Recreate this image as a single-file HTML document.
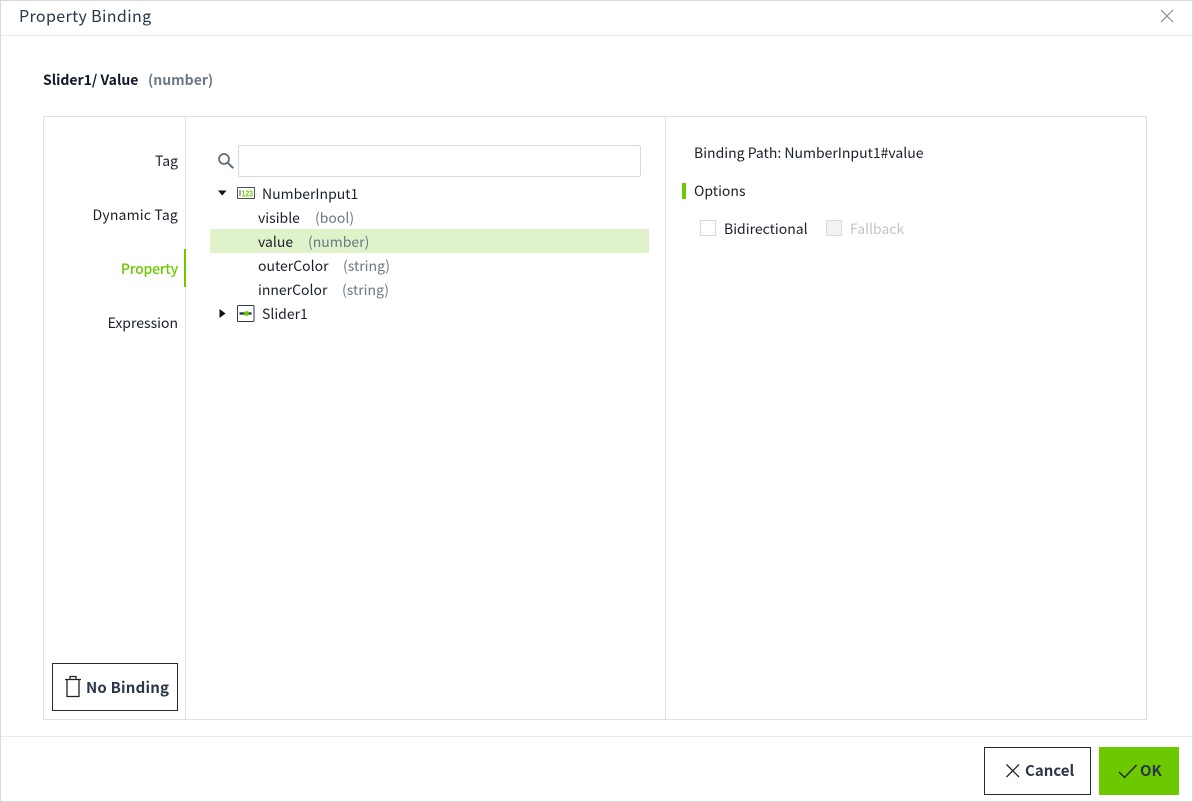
<!DOCTYPE html>
<html><head><meta charset="utf-8">
<style>
html,body{margin:0;padding:0;background:#fff}
#r{position:relative;width:1193px;height:802px;overflow:hidden;background:#fff;font-family:"Noto Sans CJK KR","Liberation Sans",sans-serif;font-size:14px;color:#1a202c}
#r div{position:absolute;white-space:nowrap}
.t{line-height:20px;height:20px}
.g{color:#6b7785}
.l{background:#e0e0e0}
</style></head><body>
<div id="r">
<div style="left:0;top:0;width:1191px;height:800px;border:1px solid #d9d9d9"></div>
<div class="l" style="left:1px;top:35px;width:1191px;height:1px;background:#ebebeb"></div>
<div class="l" style="left:1px;top:736px;width:1191px;height:1px;background:#ebebeb"></div>
<div class="t" style="left:19px;top:4px;font-size:16px;line-height:22px;height:22px;color:#2b3648;letter-spacing:.37px">Property Binding</div>
<svg style="position:absolute;left:1160px;top:9px" width="14" height="14" viewBox="0 0 14 14"><path d="M1 1L13 13M13 1L1 13" stroke="#8c8c8c" stroke-width="1.2" fill="none"/></svg>
<div class="t" style="left:43px;top:70px;font-weight:700;color:#111827">Slider1/ Value</div>
<div class="t" style="left:148px;top:70px;font-weight:700;color:#6b7785">(number)</div>

<div style="left:43px;top:116px;width:1102px;height:602px;border:1px solid #e0e0e0"></div>
<div class="l" style="left:185px;top:117px;width:1px;height:602px"></div>
<div class="l" style="left:665px;top:117px;width:1px;height:602px"></div>

<div class="t" style="right:1015px;top:151px">Tag</div>
<div class="t" style="right:1015px;top:205px;letter-spacing:.18px">Dynamic Tag</div>
<div class="t" style="right:1015px;top:259px;color:#6cc900;font-weight:500;letter-spacing:-.22px">Property</div>
<div style="left:184px;top:249px;width:2px;height:38px;background:#6cc900"></div>
<div class="t" style="right:1015px;top:313px">Expression</div>

<div style="left:52px;top:663px;width:124px;height:46px;border:1px solid #1f2a3c"></div>
<svg style="position:absolute;left:64px;top:675px" width="18" height="23" viewBox="0 0 18 23"><path d="M1 4.500H17M3 4.500V21.500H15V4.500M6 4.500V1.500H12V4.500" stroke="#222" stroke-width="1.300" fill="none"/></svg>
<div class="t" style="left:86px;top:678px;font-size:15px;font-weight:700;color:#2b3648;letter-spacing:.2px">No Binding</div>

<svg style="position:absolute;left:217px;top:152px" width="18" height="18" viewBox="0 0 18 18"><circle cx="7" cy="7" r="5" stroke="#5f6b78" stroke-width="1.700" fill="none"/><path d="M10.800 10.800L16.200 16.200" stroke="#5f6b78" stroke-width="2" fill="none"/></svg>
<div style="left:238px;top:145px;width:401px;height:30px;border:1px solid #d9d9d9;border-radius:2px"></div>

<svg style="position:absolute;left:217px;top:189px" width="10" height="8" viewBox="0 0 10 8"><path d="M1 1.500H9.500L5.200 6.500Z" fill="#111"/></svg>
<svg style="position:absolute;left:237px;top:187px" width="18" height="13" viewBox="0 0 18 13"><rect x=".5" y=".5" width="17" height="11" fill="#fff" stroke="#4a5562"/><path d="M3 3V9" stroke="#4a5562"/><text x="4.500" y="9.300" font-size="8" font-weight="700" fill="#6cc900" font-family="Liberation Sans" textLength="11.500" lengthAdjust="spacingAndGlyphs">123</text></svg>
<div class="t" style="left:262px;top:184px">NumberInput1</div>

<div class="t" style="left:258px;top:208px">visible</div>
<div class="t g" style="left:315px;top:208px">(bool)</div>
<div style="left:210px;top:229px;width:439px;height:24px;background:#dff2c9"></div>
<div class="t" style="left:258px;top:232px">value</div>
<div class="t g" style="left:308px;top:232px">(number)</div>
<div class="t" style="left:258px;top:256px">outerColor</div>
<div class="t g" style="left:343px;top:256px">(string)</div>
<div class="t" style="left:258px;top:280px">innerColor</div>
<div class="t g" style="left:342px;top:280px">(string)</div>

<svg style="position:absolute;left:219px;top:308px" width="8" height="11" viewBox="0 0 8 11"><path d="M.5 1L6.500 5.500L.5 10Z" fill="#111"/></svg>
<svg style="position:absolute;left:237px;top:305px" width="18" height="17" viewBox="0 0 18 17"><rect x=".5" y=".5" width="16.500" height="16" rx="1" fill="#fff" stroke="#2f3947"/><path d="M2.500 8.500H14.500" stroke="#2f3947" stroke-width="2.400"/><circle cx="9.500" cy="8.500" r="2.400" fill="#6cc900"/></svg>
<div class="t" style="left:262px;top:304px">Slider1</div>

<div class="t" style="left:694px;top:143px">Binding Path: NumberInput1#value</div>
<div style="left:682px;top:183px;width:4px;height:16px;background:#6cc900"></div>
<div class="t" style="left:694px;top:181px">Options</div>
<div style="left:700px;top:220px;width:14px;height:14px;border:1px solid #d9d9d9"></div>
<div class="t" style="left:724px;top:219px">Bidirectional</div>
<div style="left:826px;top:220px;width:14px;height:14px;border:1px solid #d9d9d9;background:#f2f2f2"></div>
<div class="t" style="left:850px;top:219px;color:#c4c4c4">Fallback</div>

<div style="left:984px;top:747px;width:105px;height:46px;border:1px solid #1f2a3c"></div>
<svg style="position:absolute;left:1005px;top:763px" width="16" height="16" viewBox="0 0 16 16"><path d="M1.500 1.500L14 14M14 1.500L1.500 14" stroke="#222" stroke-width="1.300" fill="none"/></svg>
<div class="t" style="left:1025px;top:761px;font-size:15px;font-weight:700;color:#2b3648">Cancel</div>
<div style="left:1099px;top:747px;width:80px;height:48px;background:#6cc900"></div>
<svg style="position:absolute;left:1118px;top:763px" width="20" height="16" viewBox="0 0 20 16"><path d="M1 9L6.500 14.500L18.500 2" stroke="#1a1a1a" stroke-width="1.300" fill="none"/></svg>
<div class="t" style="left:1140px;top:761px;font-size:15px;font-weight:700;color:#2b3648">OK</div>
</div>
</body></html>
